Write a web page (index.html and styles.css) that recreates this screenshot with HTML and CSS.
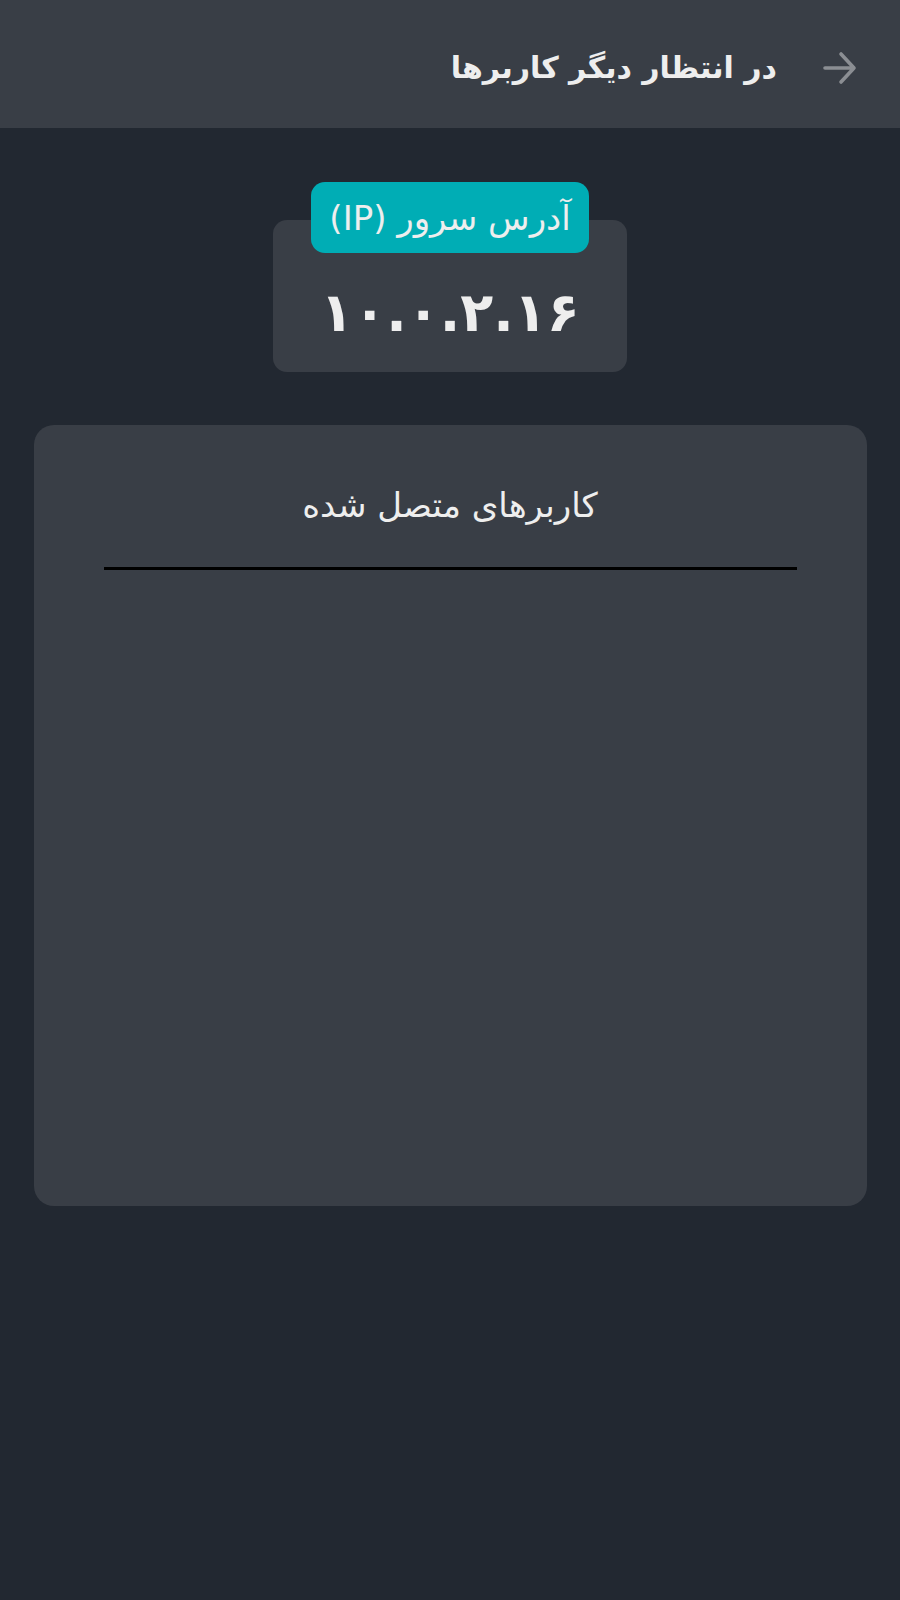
FILE: index.html
```html
<!DOCTYPE html>
<html lang="fa" dir="rtl">
<head>
<meta charset="utf-8">
<title>در انتظار دیگر کاربرها</title>
<link rel="stylesheet" href="styles.css">
</head>
<body>
<header class="topbar">
  <svg class="back" viewBox="0 0 34 34" width="34" height="34" aria-hidden="true">
    <path d="M2 17 H31 M18 3 L31 17 L18 31" fill="none" stroke="#8b8e93" stroke-width="3.6" stroke-linecap="round" stroke-linejoin="round"/>
  </svg>
  <h1 class="title">در انتظار دیگر کاربرها</h1>
</header>
<main class="content">
  <section class="ip-wrap">
    <div class="ip-badge">آدرس سرور (IP)</div>
    <div class="ip-box">
      <span class="ip-value" dir="ltr">۱۰.۰.۲.۱۶</span>
    </div>
  </section>
  <section class="users-card">
    <h2 class="users-title">کاربرهای متصل شده</h2>
    <div class="divider"></div>
  </section>
</main>
</body>
</html>
```
FILE: styles.css
```css
html, body {
  margin: 0;
  padding: 0;
}
body {
  background: #222831;
  color: #eeeeee;
  font-family: "DejaVu Sans", "Noto Sans", sans-serif;
  width: 900px;
  min-height: 1600px;
}
.topbar {
  height: 128px;
  background: #393e46;
  display: flex;
  align-items: center;
  padding-right: 43px;
  padding-top: 8px;
  gap: 46px;
  box-sizing: border-box;
}
.back {
  display: block;
  flex: none;
}
.title {
  margin: 0;
  font-size: 30px;
  font-weight: bold;
  color: #eeeeee;
  line-height: 1;
}
.content {
  display: flex;
  flex-direction: column;
  align-items: center;
}
.ip-wrap {
  padding-top: 54px;
  display: flex;
  flex-direction: column;
  align-items: center;
}
.ip-badge {
  position: relative;
  z-index: 1;
  box-sizing: border-box;
  width: 278px;
  height: 71px;
  border-radius: 14px;
  background: #00adb5;
  color: #eeeeee;
  font-size: 34px;
  display: flex;
  align-items: center;
  justify-content: center;
}
.ip-box {
  box-sizing: border-box;
  width: 354px;
  height: 152px;
  margin-top: -33px;
  padding-top: 33px;
  border-radius: 14px;
  background: #393e46;
  display: flex;
  align-items: center;
  justify-content: center;
}
.ip-value {
  font-size: 54px;
  font-weight: bold;
  letter-spacing: 2px;
  color: #eeeeee;
}
.users-card {
  box-sizing: border-box;
  width: 833px;
  height: 781px;
  margin-top: 53px;
  border-radius: 20px;
  background: #393e46;
  padding-top: 56px;
}
.users-title {
  margin: 0;
  text-align: center;
  font-size: 34px;
  font-weight: normal;
  line-height: 48px;
  color: #eeeeee;
}
.divider {
  height: 3px;
  background: #000000;
  margin: 38px 70px 0;
}
```
